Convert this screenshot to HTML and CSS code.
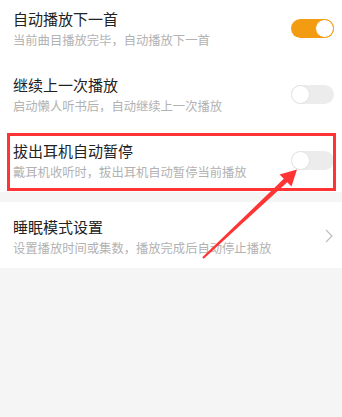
FILE: index.html
```html
<!DOCTYPE html>
<html lang="zh">
<head>
<meta charset="utf-8">
<link rel="stylesheet" href="styles.css">
</head>
<body>
<div class="page">
  <div class="group first">
    <div class="row">
      <div class="text">
        <div class="title">自动播放下一首</div>
        <div class="sub">当前曲目播放完毕，自动播放下一首</div>
      </div>
      <div class="switch on"><span class="knob"></span></div>
    </div>
    <div class="row">
      <div class="text">
        <div class="title">继续上一次播放</div>
        <div class="sub">启动懒人听书后，自动继续上一次播放</div>
      </div>
      <div class="switch"><span class="knob"></span></div>
    </div>
    <div class="row">
      <div class="text">
        <div class="title">拔出耳机自动暂停</div>
        <div class="sub">戴耳机收听时，拔出耳机自动暂停当前播放</div>
      </div>
      <div class="switch"><span class="knob"></span></div>
    </div>
  </div>
  <div class="group">
    <div class="row">
      <div class="text">
        <div class="title">睡眠模式设置</div>
        <div class="sub">设置播放时间或集数，播放完成后自动停止播放</div>
      </div>
      <svg class="chev" width="8" height="14" viewBox="0 0 8 14"><path d="M1 1 L7 7 L1 13" fill="none" stroke="#bdbdbd" stroke-width="1.2"/></svg>
    </div>
  </div>
  <div class="highlight"></div>
  <svg class="arrow" width="342" height="417" viewBox="0 0 342 417">
    <polygon points="202.3,257.2 283.8,178.8 279.5,174.5 297,169.5 291.5,186.5 287.2,182.2 203.7,258.8" fill="#ff3535"/>
  </svg>
</div>
</body>
</html>
```
FILE: styles.css
```css
html, body {
  margin: 0;
  padding: 0;
  background: #f5f5f5;
  font-family: "Noto Sans CJK SC", "Noto Sans", sans-serif;
}
.page {
  position: relative;
  width: 342px;
  height: 417px;
  overflow: hidden;
}
.group {
  background: #ffffff;
  margin-top: 10px;
}
.group.first {
  margin-top: -6px;
}
.row {
  display: flex;
  align-items: center;
  height: 66px;
  box-sizing: border-box;
  padding: 2px 8px 0 13px;
}
.text {
  flex: 1;
}
.title {
  font-size: 15px;
  line-height: 21px;
  color: #222222;
}
.sub {
  font-size: 12.3px;
  line-height: 18px;
  margin-top: 2px;
  color: #b2b2b2;
}
.switch {
  width: 43px;
  height: 19px;
  border-radius: 10px;
  background: #ececec;
  position: relative;
  box-sizing: border-box;
}
.switch .knob {
  position: absolute;
  left: 0;
  top: 0;
  width: 19px;
  height: 19px;
  border-radius: 50%;
  background: #ffffff;
  box-sizing: border-box;
  border: 1px solid #e3e3e3;
}
.switch.on {
  background: #f39c12;
}
.switch.on .knob {
  left: auto;
  right: 0;
  border: 1.5px solid #f39c12;
}
.chev {
  margin-right: 1px;
}
.highlight {
  position: absolute;
  left: 7px;
  top: 133px;
  width: 329px;
  height: 58px;
  box-sizing: border-box;
  border: 3px solid #ff3535;
}
.arrow {
  position: absolute;
  left: 0;
  top: 0;
}
```
